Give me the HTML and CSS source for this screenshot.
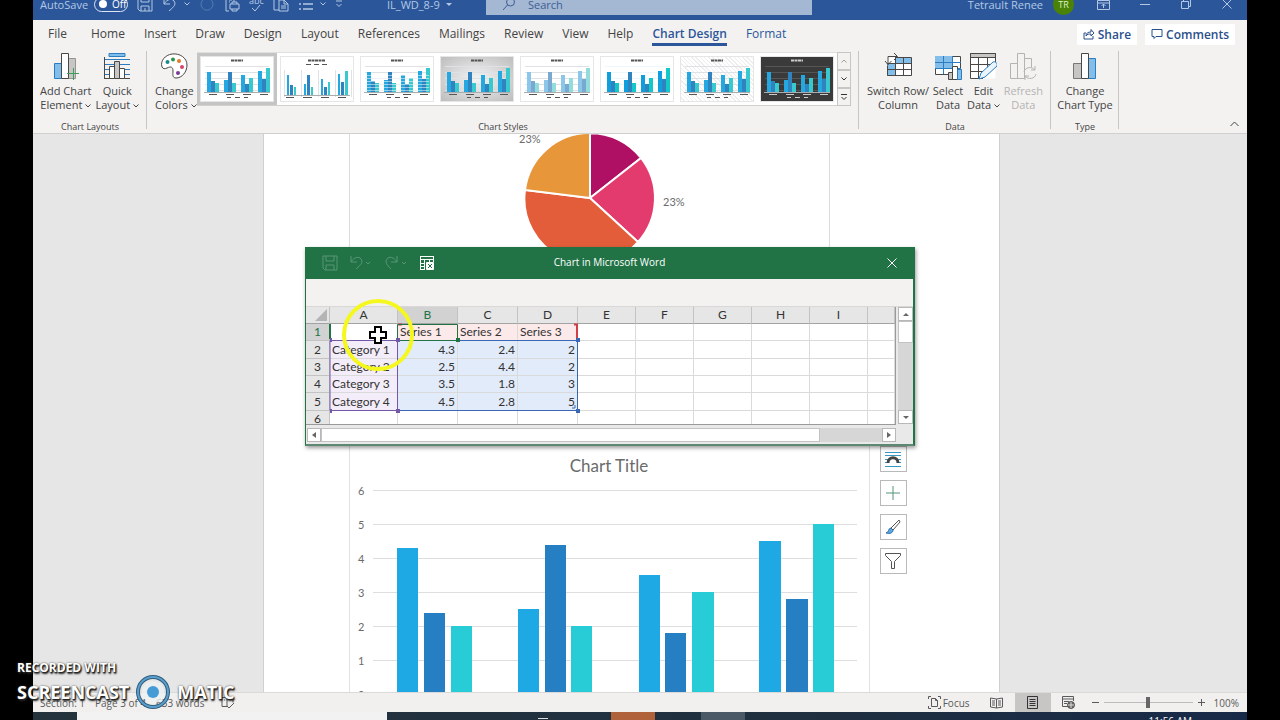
FILE: index.html
```html
<!DOCTYPE html>
<html lang="en">
<head>
<meta charset="utf-8">
<title>IL_WD_8-9 - Word</title>
<link rel="stylesheet" href="styles.css">
</head>
<body>
<svg class="defs" aria-hidden="true">
  <symbol id="bars" viewBox="0 0 72 44">
    <g class="t-lines"><path d="M4 9.500h64M4 15.500h64M4 21.500h64M4 27.500h64M4 33.500h64"/></g>
    <path class="t-axis" d="M3 35.500h66"/>
    <g class="t-a"><path d="M6 15h4v20h-4zM23 23h4v12h-4zM40 18h4v17h-4zM57 14h4v21h-4z"/></g>
    <g class="t-b"><path d="M10 24h4v11h-4zM27 15h4v20h-4zM44 27h4v8h-4zM61 22h4v13h-4z"/></g>
    <g class="t-c"><path d="M14 26h4v9h-4zM31 26h4v9h-4zM48 21h4v14h-4zM65 11h4v24h-4z"/></g>
    <path class="t-text" d="M30 3.500h12" stroke-width="2" stroke-dasharray="3 .5"/>
    <path class="t-text" d="M8 37.500h8M25 37.500h8M42 37.500h8M59 37.500h8M26 40.500h4M34 40.500h5M43 40.500h4"/>
  </symbol>
  <symbol id="thin" viewBox="0 0 72 44">
    <g class="t-lines"><path d="M3.500 13v27M20.500 13v27M37.500 13v27M54.500 13v27M70.500 13v27"/></g>
    <path class="t-axis" d="M3 38.500h66"/>
    <path class="t-a" d="M6 18h2v20h-2zM23 27h2v11h-2zM40 22h2v16h-2zM57 17h2v21h-2z"/>
    <path class="t-b" d="M9 28h3v10h-3zM26 18h3v20h-3zM43 30h3v8h-3zM60 25h3v13h-3z"/>
    <path class="t-c" d="M13 30h2v8h-2zM30 30h2v8h-2zM47 25h2v13h-2zM64 14h3v24h-3z"/>
    <path class="t-text" d="M27 3.500h17" stroke-width="2" stroke-dasharray="3 .5"/>
    <path class="t-text" d="M25 7.500h5M33 7.500h5M41 7.500h5M5 40.500h8M22 40.500h9M40 40.500h8M57 40.500h8"/>
  </symbol>
  <symbol id="caret" viewBox="0 0 6 4"><path d="M.5 .5l2.500 2.500 2.500-2.500" fill="none" stroke="currentColor"/></symbol>
</svg>

<div class="screen">
  <header class="titlebar">
    <div class="quick">
      <label class="autosave">AutoSave <button class="toggle" type="button"><i></i>Off</button></label>
      <button class="tb-btn" type="button" aria-label="Save"><svg width="16" height="16" viewBox="0 0 16 16"><path d="M1 1h14v14H3l-2-2zM4 1v5h8V1M4 15v-5h8v5M8 12v3"/></svg></button>
      <button class="tb-btn" type="button" aria-label="Undo"><svg width="16" height="16" viewBox="0 0 16 16"><path d="M2 2v6h6M2 8c3-5 8-6 10-3s1 5-5 10"/></svg><svg class="caret" width="6" height="4"><use href="#caret"/></svg></button>
      <button class="tb-btn dim" type="button" aria-label="Repeat"><svg width="16" height="16" viewBox="0 0 16 16"><path d="M5 3a6 6 0 1 0 6 0M11 3V0M11 3h4"/></svg></button>
      <button class="tb-btn" type="button" aria-label="Print preview"><svg width="16" height="16" viewBox="0 0 16 16"><path d="M2 0v15h3M2 1h8v5M6 8h9v5H6zM8 8V6h5v2M8 13v2h5v-2M5 4h3M5 6h1"/></svg></button>
      <button class="tb-btn abc" type="button" aria-label="Spelling">abc<svg width="10" height="7" viewBox="0 0 10 7"><path d="M1 3l3 3 5-6"/></svg></button>
      <button class="tb-btn" type="button" aria-label="Paste"><svg width="16" height="16" viewBox="0 0 16 16"><path d="M6 14H1V1h9v3M6 4h5l4 4v7H6zM11 4v4h4M8 10h5M8 12h5"/></svg></button>
      <button class="tb-btn" type="button" aria-label="Bullets"><svg width="16" height="16" viewBox="0 0 16 16"><path d="M5 3h10M5 8h10M5 13h10M1 3h2M1 8h2M1 13h2" stroke-width="1.500"/></svg><svg class="caret" width="6" height="4"><use href="#caret"/></svg></button>
      <button class="tb-btn" type="button" aria-label="Customize"><svg width="8" height="8" viewBox="0 0 8 8"><path d="M1 1h6M1.500 4l2.500 2.500 2.500-2.500"/></svg></button>
    </div>
    <div class="doc-name">IL_WD_8-9 <span class="tri"></span></div>
    <label class="search"><svg width="14" height="14" viewBox="0 0 14 14"><circle cx="8.500" cy="5" r="4"/><path d="M5.500 8L1 13"/></svg><input type="text" placeholder="Search" aria-label="Search"></label>
    <div class="account">
      <span>Tetrault Renee</span><span class="avatar">TR</span>
      <button class="win" type="button" aria-label="Ribbon display"><svg width="13" height="12" viewBox="0 0 13 12"><path d="M.5 2.500h12v9H.5zM.5 5h12M6.500 10V6M4.500 8l2-2 2 2"/></svg></button>
      <button class="win" type="button" aria-label="Minimize"><svg width="10" height="10" viewBox="0 0 10 10"><path d="M0 5.500h10"/></svg></button>
      <button class="win" type="button" aria-label="Restore"><svg width="10" height="10" viewBox="0 0 10 10"><path d="M.5 2.500h7v7h-7zM2.500 2.500v-2h7v7h-2"/></svg></button>
      <button class="win" type="button" aria-label="Close"><svg width="10" height="10" viewBox="0 0 10 10"><path d="M.5 .5l9 9M9.500 .5l-9 9"/></svg></button>
    </div>
  </header>

  <nav class="tabs">
    <button type="button" class="file">File</button><button type="button">Home</button><button type="button">Insert</button><button type="button">Draw</button><button type="button">Design</button><button type="button">Layout</button><button type="button">References</button><button type="button">Mailings</button><button type="button">Review</button><button type="button">View</button><button type="button">Help</button><button type="button" class="active">Chart Design</button><button type="button" class="context">Format</button>
    <div class="tab-actions">
      <button type="button" class="pill"><svg width="12" height="12" viewBox="0 0 12 12"><path d="M3 5H1v6h9V8M3 8c0-3 2-4 5-4V1.500l3 3.500-3 3V6C6 6 4 6 3 8z"/></svg>Share</button>
      <button type="button" class="pill"><svg width="12" height="12" viewBox="0 0 12 12"><path d="M1 1.500h10v7H5L3 10.500v-2H1z"/></svg>Comments</button>
    </div>
  </nav>

  <section class="ribbon">
    <div class="group g-layouts">
      <div class="tools">
        <button type="button" class="tool"><svg width="28" height="28" viewBox="0 0 28 28"><path d="M2.500 11.500h7v15h-7z" fill="#83bdea" stroke="#2b7cc1"/><path d="M15.500 6.500h8v20h-8z" fill="#c8c6c4" stroke="#979593"/><path d="M9.500 1.500h7v25h-7z" fill="#fff" stroke="#494846"/><path d="M15 21.500h12M21.500 16v12" stroke="#3c9e5a"/></svg>Add Chart<br>Element <svg class="caret" width="6" height="4"><use href="#caret"/></svg></button>
        <button type="button" class="tool"><svg width="28" height="28" viewBox="0 0 28 28"><path d="M6 1.500h16v3H6z" fill="#83bdea" stroke="#2b7cc1"/><path d="M2 7.500h25M2 12.500h25M2 17.500h25M2 22.500h25" stroke="#2b7cc1"/><path d="M1.500 5v22M1 26.500h26" stroke="#494846"/><path d="M6.500 14.500h5v12h-5zM16.500 16.500h5v10h-5z" fill="#fff" stroke="#494846"/><path d="M11.500 9.500h5v17h-5z" fill="#c8c6c4" stroke="#494846"/></svg>Quick<br>Layout <svg class="caret" width="6" height="4"><use href="#caret"/></svg></button>
      </div>
      <div class="caption">Chart Layouts</div>
    </div>
    <div class="group g-styles">
      <div class="tools">
        <button type="button" class="tool"><svg width="28" height="28" viewBox="0 0 28 28"><path d="M12 2C5 3 0 9 2 15c1 2 3 2 5 1 4-2 6-1 6 3 0 3-1 7 3 7 6 0 11-6 11-13S20 1 12 2z" fill="#fff" stroke="#494846"/><g stroke="none"><circle cx="7.500" cy="10" r="2" fill="#1b8a8f"/><circle cx="13" cy="7.500" r="2" fill="#27964e"/><circle cx="19" cy="9" r="2" fill="#e07b28"/><circle cx="22" cy="15" r="2" fill="#d6436b"/><circle cx="18" cy="21" r="2" fill="#7a3a9c"/></g></svg>Change<br>Colors <svg class="caret" width="6" height="4"><use href="#caret"/></svg></button>
        <div class="gallery">
          <button type="button" class="thumb selected" aria-label="Style 1"><svg viewBox="0 0 72 44"><use href="#bars"/></svg></button>
          <button type="button" class="thumb" aria-label="Style 2"><svg viewBox="0 0 72 44"><use href="#thin"/></svg></button>
          <button type="button" class="thumb striped" aria-label="Style 3"><svg viewBox="0 0 72 44"><use href="#bars"/><path d="M4 18.500h64M4 21.500h64M4 24.500h64M4 27.500h64M4 30.500h64M4 33.500h64" stroke="#fff" opacity=".5"/></svg></button>
          <button type="button" class="thumb silver" aria-label="Style 4"><svg viewBox="0 0 72 44"><use href="#bars"/></svg></button>
          <button type="button" class="thumb outline" aria-label="Style 5"><svg viewBox="0 0 72 44"><use href="#bars"/></svg></button>
          <button type="button" class="thumb bold" aria-label="Style 6"><svg viewBox="0 0 72 44"><use href="#bars"/></svg></button>
          <button type="button" class="thumb hatch" aria-label="Style 7"><svg viewBox="0 0 72 44"><use href="#bars"/></svg></button>
          <button type="button" class="thumb dark" aria-label="Style 8"><svg viewBox="0 0 72 44"><use href="#bars"/></svg></button>
        </div>
        <div class="gallery-nav">
          <button type="button" aria-label="Previous" class="off"><svg width="6" height="4" viewBox="0 0 6 4"><path d="M.5 3.500L3 1l2.500 2.500"/></svg></button>
          <button type="button" aria-label="Next"><svg width="6" height="4" viewBox="0 0 6 4"><path d="M.5 .5L3 3 5.500 .5"/></svg></button>
          <button type="button" aria-label="More"><svg width="8" height="7" viewBox="0 0 8 7"><path d="M1 .5h6M1.500 3L4 5.500 6.500 3"/></svg></button>
        </div>
      </div>
      <div class="caption">Chart Styles</div>
    </div>
    <div class="group g-data">
      <div class="tools">
        <button type="button" class="tool"><svg width="28" height="28" viewBox="0 0 28 28"><path d="M3.500 5.500h24v18h-24z" fill="#fff" stroke="none"/><path d="M11 5h16v6H11zM3 11h8v13H3z" fill="#83bdea" stroke="none"/><path d="M11.500 5.500h16v18h-24v-10M3 11.500h24M3 17.500h24M11.500 5v18M19.500 5v18" stroke="#494846" fill="none"/><path d="M4 13V4.500h9M10 1l3.500 3.500L10 8M1 9l3 3.500L7.500 9" stroke="#494846" fill="none"/></svg>Switch Row/<br>Column</button>
        <button type="button" class="tool"><svg width="28" height="28" viewBox="0 0 28 28"><path d="M1.500 4.500h25v18h-25z" fill="#fff" stroke="#494846"/><path d="M1 4h17v13H1z" fill="#83bdea" stroke="none"/><path d="M1 10.500h26M1 16.500h26M9.500 4v18M18.500 4v18" stroke="#2b7cc1"/><path d="M14.500 20.500h5v7h-5z" fill="#c8c6c4" stroke="#494846"/><path d="M18.500 14.500h5v13h-5z" fill="#fff" stroke="#494846"/><path d="M23.500 17.500h4v10h-4z" fill="#83bdea" stroke="#2b7cc1"/></svg>Select<br>Data</button>
        <button type="button" class="tool"><svg width="28" height="28" viewBox="0 0 28 28"><path d="M1.500 1.500h25v25h-25z" fill="#fff" stroke="none"/><path d="M1.500 1.500h25v4h-25z" fill="#c8c6c4" stroke="#494846"/><path d="M14 26.500H1.500v-25h25v12M1 5.500h25M1 12.500h25M1 19.500h16M9.500 5v21M18.500 5v13" fill="none" stroke="#494846"/><path d="M10 27l2-6 12-11c2-1 5 1 4 4L16 25z" fill="#e9f4fc" stroke="#2b7cc1"/></svg>Edit<br>Data <svg class="caret" width="6" height="4"><use href="#caret"/></svg></button>
        <button type="button" class="tool" disabled><svg width="28" height="28" viewBox="0 0 28 28" fill="none" stroke="#b5b3b1"><path d="M1.500 11.500h7v15h-7zM8.500 26.500v-25h7v25h-7M15.500 6.500h7v9"/><path d="M15 20c1-5 8-6 11-2v-4m0 4h-4M27 22c-1 5-8 6-11 2v4m0-4h4"/></svg>Refresh<br>Data</button>
      </div>
      <div class="caption">Data</div>
    </div>
    <div class="group g-type">
      <div class="tools">
        <button type="button" class="tool"><svg width="28" height="28" viewBox="0 0 28 28"><path d="M2.500 11.500h8v15h-8z" fill="#c8c6c4" stroke="#797775"/><path d="M17.500 6.500h7v20h-7z" fill="#83bdea" stroke="#2b7cc1"/><path d="M10.500 1.500h7v25h-7z" fill="#fff" stroke="#494846"/></svg>Change<br>Chart Type</button>
      </div>
      <div class="caption">Type</div>
    </div>
    <button type="button" class="collapse" aria-label="Collapse the ribbon"><svg width="9" height="6" viewBox="0 0 9 6"><path d="M.5 5l4-4 4 4"/></svg></button>
  </section>

  <main class="canvas">
    <article class="page">
      <figure class="pie-frame">
        <svg viewBox="0 0 480 200" width="480" height="200">
          <g stroke="#fff" stroke-width="2">
            <path d="M240 64V-1A65 65 0 0 1 291 24z" fill="#b01063"/>
            <path d="M240 64L291 24A65 65 0 0 1 288 108z" fill="#e33b6d"/>
            <path d="M240 64L288 108A65 65 0 0 1 175 56z" fill="#e35d3a"/>
            <path d="M240 64L175 56A65 65 0 0 1 240 -1z" fill="#e8963a"/>
          </g>
          <text x="169" y="9">23%</text><text x="313" y="72">23%</text>
        </svg>
      </figure>
      <figure class="bar-frame">
        <figcaption>Chart Title</figcaption>
        <svg viewBox="0 0 520 220" width="520" height="220">
          <path d="M23 10.500h484M23 44.500h484M23 78.500h484M23 112.500h484M23 146.500h484M23 180.500h484" stroke="#dcdee0"/>
          <g><text x="8" y="15">6</text><text x="8" y="49">5</text><text x="8" y="83">4</text><text x="8" y="117">3</text><text x="8" y="151">2</text><text x="8" y="185">1</text><text x="8" y="219">0</text></g>
          <g stroke="none">
            <path fill="#1fa9e4" d="M47 68h21v152h-21zM168 129h21v91h-21zM289 95h21v125h-21zM409 61h22v159h-22z"/>
            <path fill="#267ec3" d="M74 133h21v87h-21zM195 65h21v155h-21zM315 153h21v67h-21zM436 119h22v101h-22z"/>
            <path fill="#27ccd6" d="M101 146h21v74h-21zM221 146h21v74h-21zM342 112h22v108h-22zM463 44h21v176h-21z"/>
          </g>
        </svg>
      </figure>
      <div class="chart-tools">
        <button type="button" aria-label="Layout options"><svg width="18" height="18" viewBox="0 0 18 18"><path d="M1 2.500h16M1 5.500h16M1 9.500h3M14 9.500h3M1 12.500h2M15 12.500h2M1 16.500h16" stroke="#3a96c4"/><path d="M4 13c0-7 10-7 10 0" stroke="#444" stroke-width="3"/></svg></button>
        <button type="button" aria-label="Chart elements"><svg width="18" height="18" viewBox="0 0 18 18"><path d="M2 9h14M9 2v14" stroke="#559579"/></svg></button>
        <button type="button" aria-label="Chart styles"><svg width="18" height="18" viewBox="0 0 18 18"><path d="M7 10L15 2l1 2-7 8z" fill="#fff" stroke="#555"/><path d="M2 15c3 0 2-5 5-5l2 2c0 3-3 4-7 3z" fill="#5fa9e0" stroke="#2b6ca8"/></svg></button>
        <button type="button" aria-label="Chart filters"><svg width="18" height="18" viewBox="0 0 18 18"><path d="M1.500 1.500h15v2l-6 6v7h-3v-7l-6-6z" stroke="#555"/></svg></button>
      </div>
    </article>

    <section class="sheet-window">
      <header class="sheet-title">
        <svg width="16" height="16" viewBox="0 0 16 16" class="faded"><path d="M1 1h14v14H3l-2-2zM4 1v5h8V1M4 15v-5h8v5"/></svg>
        <svg width="24" height="16" viewBox="0 0 24 16" class="faded"><path d="M2 1v6h6M2 7c3-5 8-6 10-3s1 5-5 10M17 7l2 2 2-2"/></svg>
        <svg width="24" height="16" viewBox="0 0 24 16" class="faded"><path d="M13 1v6H7M13 7C10 2 5 1 3 4s-1 5 4 10M18 7l2 2 2-2"/></svg>
        <svg width="16" height="16" viewBox="0 0 16 16"><path d="M1 1.500h14M1 4.500h14M1.500 1v14M1 14.500h5M1 8.500h5M1 11.500h5M5.500 4v11M10.500 4v3M14.500 1v6"/><path d="M7.500 7.500h7v7h-7z" fill="#fff"/><path d="M9 9l4 4M13 9l-4 4" stroke="#217346"/></svg>
        <h2>Chart in Microsoft Word</h2>
        <button type="button" aria-label="Close"><svg width="10" height="10" viewBox="0 0 10 10"><path d="M.5 .5l9 9M9.500 .5l-9 9"/></svg></button>
      </header>
      <div class="sheet-bar"></div>
      <div class="sheet-body">
        <div class="grid-wrap">
          <table>
            <colgroup><col class="c-row"><col class="c-a"><col class="c-b"><col class="c-b"><col class="c-b"><col class="c-e"><col class="c-e"><col class="c-e"><col class="c-e"><col class="c-e"><col></colgroup>
            <tr class="cols"><th><span class="corner"></span></th><th>A</th><th class="on">B</th><th>C</th><th>D</th><th>E</th><th>F</th><th>G</th><th>H</th><th>I</th><th></th></tr>
            <tr><th class="on">1</th><td></td><td class="red">Series 1</td><td class="red">Series 2</td><td class="red">Series 3</td><td></td><td></td><td></td><td></td><td></td><td></td></tr>
            <tr><th>2</th><td class="pur">Category 1</td><td class="num">4.3</td><td class="num">2.4</td><td class="num">2</td><td></td><td></td><td></td><td></td><td></td><td></td></tr>
            <tr><th>3</th><td class="pur">Category 2</td><td class="num">2.5</td><td class="num">4.4</td><td class="num">2</td><td></td><td></td><td></td><td></td><td></td><td></td></tr>
            <tr><th>4</th><td class="pur">Category 3</td><td class="num">3.5</td><td class="num">1.8</td><td class="num">3</td><td></td><td></td><td></td><td></td><td></td><td></td></tr>
            <tr><th>5</th><td class="pur">Category 4</td><td class="num">4.5</td><td class="num">2.8</td><td class="num">5</td><td></td><td></td><td></td><td></td><td></td><td></td></tr>
            <tr><th>6</th><td></td><td></td><td></td><td></td><td></td><td></td><td></td><td></td><td></td><td></td></tr>
          </table>
          <svg class="ranges" width="280" height="120" viewBox="0 0 280 120"><path d="M271 17v15M92 17.500h4M268 17.500h4" stroke="#cf3f45" stroke-width="2"/><path d="M24 17v15" stroke="#217346" stroke-width="2"/><path d="M152 33.500H271.500V103.500H93" stroke="#3a68b5"/><path d="M24 33.500H91.500V103.500H24z" stroke="#7358a8"/><path d="M91.500 17.500H151.500V33.500H91.500z" stroke="#217346"/><path d="M90 31h4v4h-4zM90 102h4v4h-4zM24 31h2v4h-2zM24 102h2v4h-2z" fill="#7358a8"/><path d="M270 31h4v4h-4zM270 102h4v4h-4z" fill="#3a68b5"/><path d="M150 31h4v4h-4z" fill="#217346"/><path d="M266 101h3v-3" stroke="#3a68b5"/></svg>
        </div>
        <div class="vscroll"><button type="button" aria-label="Up"><i class="up"></i></button><span class="knob"></span><span class="track"></span><button type="button" aria-label="Down"><i class="down"></i></button></div>
      </div>
      <div class="hscroll"><button type="button" aria-label="Left"><i class="left"></i></button><span class="knob"></span><span class="track"></span><button type="button" aria-label="Right"><i class="right"></i></button></div>
    </section>
  </main>

  <footer class="status">
    <span class="s-sec">Section: 1</span><span class="s-page">Page 3 of 4</span><span class="s-words">633 words</span>
    <svg width="14" height="13" viewBox="0 0 14 13"><path d="M1 1.500h5v9H1zM6 1.500h6v5M6 10l2 2 5-5M3 4h1"/></svg>
    <div class="status-right">
      <button type="button" class="focus"><svg width="13" height="13" viewBox="0 0 13 13"><path d="M.5 3V.5H3M10 .5h2.500V3M.5 10v2.500H3M10 12.500h2.500V10M3.500 2.500h4l2 2v6h-6zM7.500 2.500v2h2"/></svg>Focus</button>
      <button type="button" class="view" aria-label="Read mode"><svg width="13" height="12" viewBox="0 0 13 12"><path d="M6.500 2L.5 1v9l6 1 6-1V1zM6.500 2v9M2 4h3M2 6h3M2 8h3M8 4h3M8 6h3M8 8h3"/></svg></button>
      <button type="button" class="view current" aria-label="Print layout"><svg width="11" height="13" viewBox="0 0 11 13"><path d="M.5 .5h10v12H.5zM2.500 3.500h6M2.500 5.500h6M2.500 7.500h6M2.500 9.500h6"/></svg></button>
      <button type="button" class="view" aria-label="Web layout"><svg width="13" height="13" viewBox="0 0 13 13"><path d="M6 10.500H.5V.5h11V5M.5 3h11M2 5.500h5M2 7.500h3"/><circle cx="9" cy="9" r="3.500" fill="#666"/><path d="M9 6v6M6 9h6" stroke="#ddd"/></svg></button>
      <button type="button" class="zoom-btn" aria-label="Zoom out"><svg width="7" height="7" viewBox="0 0 7 7"><path d="M0 3.500h7"/></svg></button>
      <input type="range" min="0" max="100" value="50" aria-label="Zoom">
      <button type="button" class="zoom-btn" aria-label="Zoom in"><svg width="7" height="7" viewBox="0 0 7 7"><path d="M0 3.500h7M3.500 0v7"/></svg></button>
      <span class="pct">100%</span>
    </div>
  </footer>
  <div class="taskbar"><span class="task-search"></span><span class="task-mark"></span><span class="task-app orange"></span><span class="task-app grey"></span><time>11:56 AM</time></div>
</div>

<svg class="pointer" width="74" height="74" viewBox="0 0 74 74"><circle cx="37" cy="37" r="34" fill="none" stroke="#f4f81f" stroke-width="4"/><path d="M34 29h6v5h5v6h-5v5h-6v-5h-5v-6h5z" fill="#fff" stroke="#000" stroke-width="2"/></svg>
<div class="watermark"><div class="wm-small">RECORDED WITH</div><div class="wm-row"><span>SCREENCAST</span><svg width="36" height="36" viewBox="0 0 36 36"><circle cx="18" cy="18" r="11" fill="#eef1f3" stroke="none" opacity=".8"/><circle cx="18" cy="18" r="15" stroke="#2f5e80" stroke-width="4"/><circle cx="18" cy="18" r="15" stroke="#5b9fcb" stroke-width="2"/><circle cx="18" cy="18" r="6" fill="#459bd6" stroke="none"/></svg><span>MATIC</span></div></div>
</body>
</html>
```
FILE: styles.css
```css
* { box-sizing: border-box; }
body { margin: 0; background: #000; height: 100vh; overflow: hidden; position: relative; font-family: "Open Sans", "Noto Sans", sans-serif; font-size: 12px; color: #444; }
button { font: inherit; color: inherit; border: 0; background: none; padding: 0; margin: 0; }
svg { fill: none; stroke: currentColor; flex: none; }
svg text { stroke: none; fill: #6b6b6b; font-family: Lato, sans-serif; font-size: 11px; }
.defs { position: absolute; width: 0; height: 0; }
.screen { margin: 0 33px; height: 100vh; display: flex; flex-direction: column; overflow: hidden; }

.titlebar { flex: none; height: 32px; margin-top: -12px; background: #2b579a; color: #b4c8e4; display: flex; align-items: center; font-size: 11px; }
.quick { display: flex; align-items: center; gap: 9px; padding-left: 7px; width: 354px; }
.autosave { display: flex; align-items: center; gap: 6px; white-space: nowrap; }
.toggle { display: flex; align-items: center; gap: 5px; width: 34px; height: 15px; border: 1px solid #dce6f4; border-radius: 8px; padding-left: 4px; color: #fff; font-size: 10px; }
.toggle i { width: 8px; height: 8px; border-radius: 50%; background: #fff; flex: none; }
.tb-btn { display: flex; align-items: center; gap: 6px; }
.dim { opacity: .3; }
.abc { flex-direction: column; gap: 0; font-size: 9px; line-height: 9px; }
.doc-name { display: flex; align-items: center; gap: 6px; width: 99px; white-space: nowrap; }
.tri { border: 3px solid transparent; border-top-color: currentColor; border-bottom: 0; }
.search { flex: 0 1 326px; height: 22px; background: #a4b7d3; color: #3d5f93; display: flex; align-items: center; gap: 12px; padding-left: 16px; }
.search input { border: 0; background: none; font: inherit; width: 200px; padding: 0; color: #3d5f93; }
.search input::placeholder { color: #3d5f93; opacity: 1; }
.account { margin-left: auto; display: flex; align-items: center; white-space: nowrap; }
.avatar { width: 21px; height: 21px; border-radius: 50%; background: #498205; color: #dff0c8; font-size: 9px; display: grid; place-items: center; margin: 0 9px 0 10px; }
.win { width: 41px; display: grid; place-items: center; }

.tabs { flex: none; height: 28px; background: #f3f2f1; display: flex; align-items: center; gap: 19px; padding: 0 12px 0 15px; white-space: nowrap; }
.tabs > button { height: 23px; border-bottom: 3px solid transparent; padding-top: 3px; line-height: 16px; }
.tabs > .file { margin-right: 5px; }
.tabs > .active { color: #2b579a; font-weight: 600; border-color: #2b579a; }
.tabs > .context { color: #2b579a; }
.tab-actions { margin-left: auto; display: flex; gap: 8px; }
.pill { background: #fff; height: 21px; padding: 0 6px; display: flex; align-items: center; gap: 3px; color: #2b4f8c; font-weight: 600; }

.ribbon { flex: none; height: 86px; background: #f3f2f1; border-bottom: 1px solid #d2d0ce; display: flex; position: relative; }
.group { display: flex; flex-direction: column; justify-content: space-between; padding: 4px 0 0; position: relative; }
.group::after { content: ""; position: absolute; right: 0; top: 3px; bottom: 4px; border-right: 1px solid #c8c6c4; }
.tools { display: flex; }
.tool { display: block; text-align: center; font-size: 11px; line-height: 14px; white-space: nowrap; }
.tool > svg:first-child { display: block; margin: 0 auto 4px; }
.tool:disabled { color: #b5b3b1; }
.caret { vertical-align: middle; }
.caption { text-align: center; font-size: 9px; line-height: 13px; }
.g-layouts { width: 114px; }
.g-layouts .tools { gap: 4px; padding-left: 7px; }
.g-styles { width: 712px; }
.g-styles .tools { padding: 0 8px; }
.g-styles .tool { width: 38px; margin-right: 4px; }
.g-data { width: 192px; }
.g-data .tools { padding: 0 8px; justify-content: space-between; }
.g-type { width: 68px; }
.g-type .tools { justify-content: center; }
.gallery { flex: 1; height: 54px; background: #fff; display: grid; grid-template-columns: repeat(8, 1fr); border-bottom: 1px solid #d2d0ce; border-top: 1px solid #e1dfdd; }
.thumb { padding: 4px; --a: #25a8df; --b: #2f83bf; --c: #38c9cf; --line: #dfe2e4; --text: #555; }
.thumb svg { display: block; width: 100%; height: 44px; background: #fff; stroke: none; outline: 1px solid #e6e6e6; }
.selected { background: #c4c4c4; }
.t-a { fill: var(--a); }
.t-b { fill: var(--b); }
.t-c { fill: var(--c); }
.t-lines { stroke: var(--line); }
.t-axis { stroke: #a9adb0; }
.t-text { stroke: var(--text); }
.silver svg { background: radial-gradient(#f4f4f4, #bdbdbd); }
.outline { --a: #8cc6e8; --b: #79a9d0; --c: #93dcdc; }
.bold { --a: #109edd; --line: #eef8fc; --c: #12c8c8; }
.hatch svg { background: repeating-linear-gradient(45deg, #fff 0 2px, #eeeeee 2px 3px); }
.dark { --line: #555; --text: #ccc; }
.dark svg { background: #3a3a3a; }
.gallery-nav { width: 14px; display: flex; flex-direction: column; }
.gallery-nav button { height: 18px; border: 1px solid #c8c6c4; display: grid; place-items: center; color: #333; }
.gallery-nav .off { color: #a19f9d; }
.collapse { margin: auto 8px 2px auto; }

.canvas { flex: 1; min-height: 0; background: #e6e6e6; position: relative; overflow: hidden; padding-right: 18px; }
.page { width: 737px; margin: 0 auto; height: 100%; background: #fff; border: solid #d0d0d0; border-width: 0 1px; padding-left: 85px; position: relative; overflow: hidden; }
.pie-frame { margin: 0; width: 481px; height: 306px; border: solid #dcdcdc; border-width: 0 1px; overflow: hidden; }
.bar-frame { margin: 0; width: 521px; border: 1px solid #e1e1e1; border-bottom: 0; height: 260px; }
figcaption { font-family: Lato, sans-serif; font-size: 17px; line-height: 20px; text-align: center; color: #6b6b6b; padding: 15px 0 4px; }
.chart-tools { position: absolute; left: 616px; top: 312px; display: grid; gap: 8px; }
.chart-tools button { width: 27px; height: 26px; border: 1px solid #b9b9b9; background: #fff; display: grid; place-items: center; }

.sheet-window { position: absolute; left: 272px; top: 113px; width: 610px; background: #e9e9e9; border: solid #217346; border-width: 0 2px 2px 1px; border-bottom-color: #5d8873; box-shadow: 1px 2px 4px #0006; }
.sheet-title { height: 32px; background: #217346; color: #fff; display: flex; align-items: center; gap: 11px; padding: 0 16px; position: relative; }
.sheet-title h2 { position: absolute; inset: 0; margin: 0; text-align: center; font-size: 10px; font-weight: 400; line-height: 30px; }
.sheet-title button { margin-left: auto; position: relative; display: grid; }
.faded { opacity: .25; }
.sheet-bar { height: 28px; background: #f3f2f1; border-bottom: 1px solid #d8d8d8; }
.sheet-body { display: flex; gap: 2px; }
.grid-wrap { flex: 1; height: 118px; overflow: hidden; position: relative; border: solid #9a9a9a; border-width: 0 1px 1px 0; }
table { border-collapse: separate; border-spacing: 0; table-layout: fixed; width: 100%; font: 12px/16px Lato, sans-serif; color: #333; background: #fff; }
th, td { height: 17px; padding: 0 2px; border: solid #dadada; border-width: 0 1px 1px 0; white-space: nowrap; line-height: 16px; overflow: hidden; }
tr:nth-child(3n) > * { height: 18px; }
th { background: #e6e6e6; font-weight: 400; text-align: center; border-color: #c3c3c3; }
.cols th { border-bottom-color: #a3a3a3; }
.on { background: #d2d2d2; color: #217346; }
.corner { display: block; margin-left: auto; width: 0; border: 6px solid transparent; border-right-color: #b4b4b4; border-bottom-color: #b4b4b4; }
.c-row { width: 24px; }
.c-a { width: 68px; }
.c-b { width: 60px; }
.c-e { width: 58px; }
.red { background: #fce9e9; }
.pur { background: #f3edf9; }
.num { background: #e2ebf9; text-align: right; }
.ranges { position: absolute; left: 0; top: 0; stroke: none; }
.vscroll { width: 15px; display: flex; flex-direction: column; background: #d6d6d6; height: 117px; }
.hscroll { display: flex; height: 14px; margin: 3px 17px 2px 1px; background: #d6d6d6; }
.vscroll button, .hscroll button { flex: none; width: 14px; height: 14px; background: #fff; border: 1px solid #b8b8b8; display: grid; place-items: center; }
.vscroll .knob { height: 22px; background: #fff; border: 1px solid #c3c3c3; }
.vscroll button { width: 15px; }
.vscroll .track, .hscroll .track { flex: 1; }
.hscroll .knob { flex: 8; background: #fff; border: 1px solid #c3c3c3; }
.up, .down, .left, .right { border: 3px solid transparent; }
.up { border-bottom-color: #666; border-top: 0; }
.down { border-top-color: #666; border-bottom: 0; }
.left { border-right: 4px solid #666; border-left: 0; }
.right { border-left: 4px solid #666; border-right: 0; }

.status { flex: none; height: 20px; background: #f1f0ef; border-top: 1px solid #dadada; display: flex; align-items: center; padding-left: 7px; font-size: 10px; color: #5a5a5a; white-space: nowrap; }
.s-sec { width: 55px; }
.s-page { width: 61px; }
.s-words { width: 65px; }
.status-right { margin-left: auto; display: flex; align-items: center; height: 100%; padding-right: 8px; }
.focus { display: flex; align-items: center; gap: 2px; margin-right: 9px; }
.view { width: 36px; height: 100%; display: grid; place-items: center; }
.current { background: #c8c6c4; color: #333; }
.zoom-btn { width: 17px; display: grid; place-items: center; }
.status input { appearance: none; width: 89px; height: 11px; margin: 0; background: linear-gradient(#bdbdbd, #bdbdbd) center / 100% 1px no-repeat; }
.status input::-webkit-slider-thumb { appearance: none; width: 4px; height: 11px; background: #666; }
.pct { margin-left: 4px; }

.taskbar { flex: none; height: 8px; background: linear-gradient(90deg, #24323c, #20303f 60%, #172948); display: flex; overflow: hidden; }
.task-search { width: 310px; margin-left: 44px; background: #f2f2f2; }
.task-mark { width: 10px; height: 1px; margin: 6px 63px 0 151px; background: #ddd; }
.task-app { width: 44px; }
.orange { background: #b0623a; }
.grey { background: #4b5966; margin-left: 46px; }
time { margin: 3px 55px 0 auto; color: #fff; font-size: 10px; line-height: 13px; white-space: nowrap; }

.pointer { position: absolute; left: 341px; top: 298px; }
.watermark { position: absolute; left: 17px; top: 661px; color: #fff; font-family: "Open Sans", sans-serif; font-weight: 700; text-shadow: 1px 1px 1px #222, 1px 2px 2px #222, 0 0 2px #444; white-space: nowrap; }
.wm-small { font-size: 12px; line-height: 13px; }
.wm-row { display: flex; align-items: center; gap: 6px; font-size: 18px; line-height: 36px; }
```
